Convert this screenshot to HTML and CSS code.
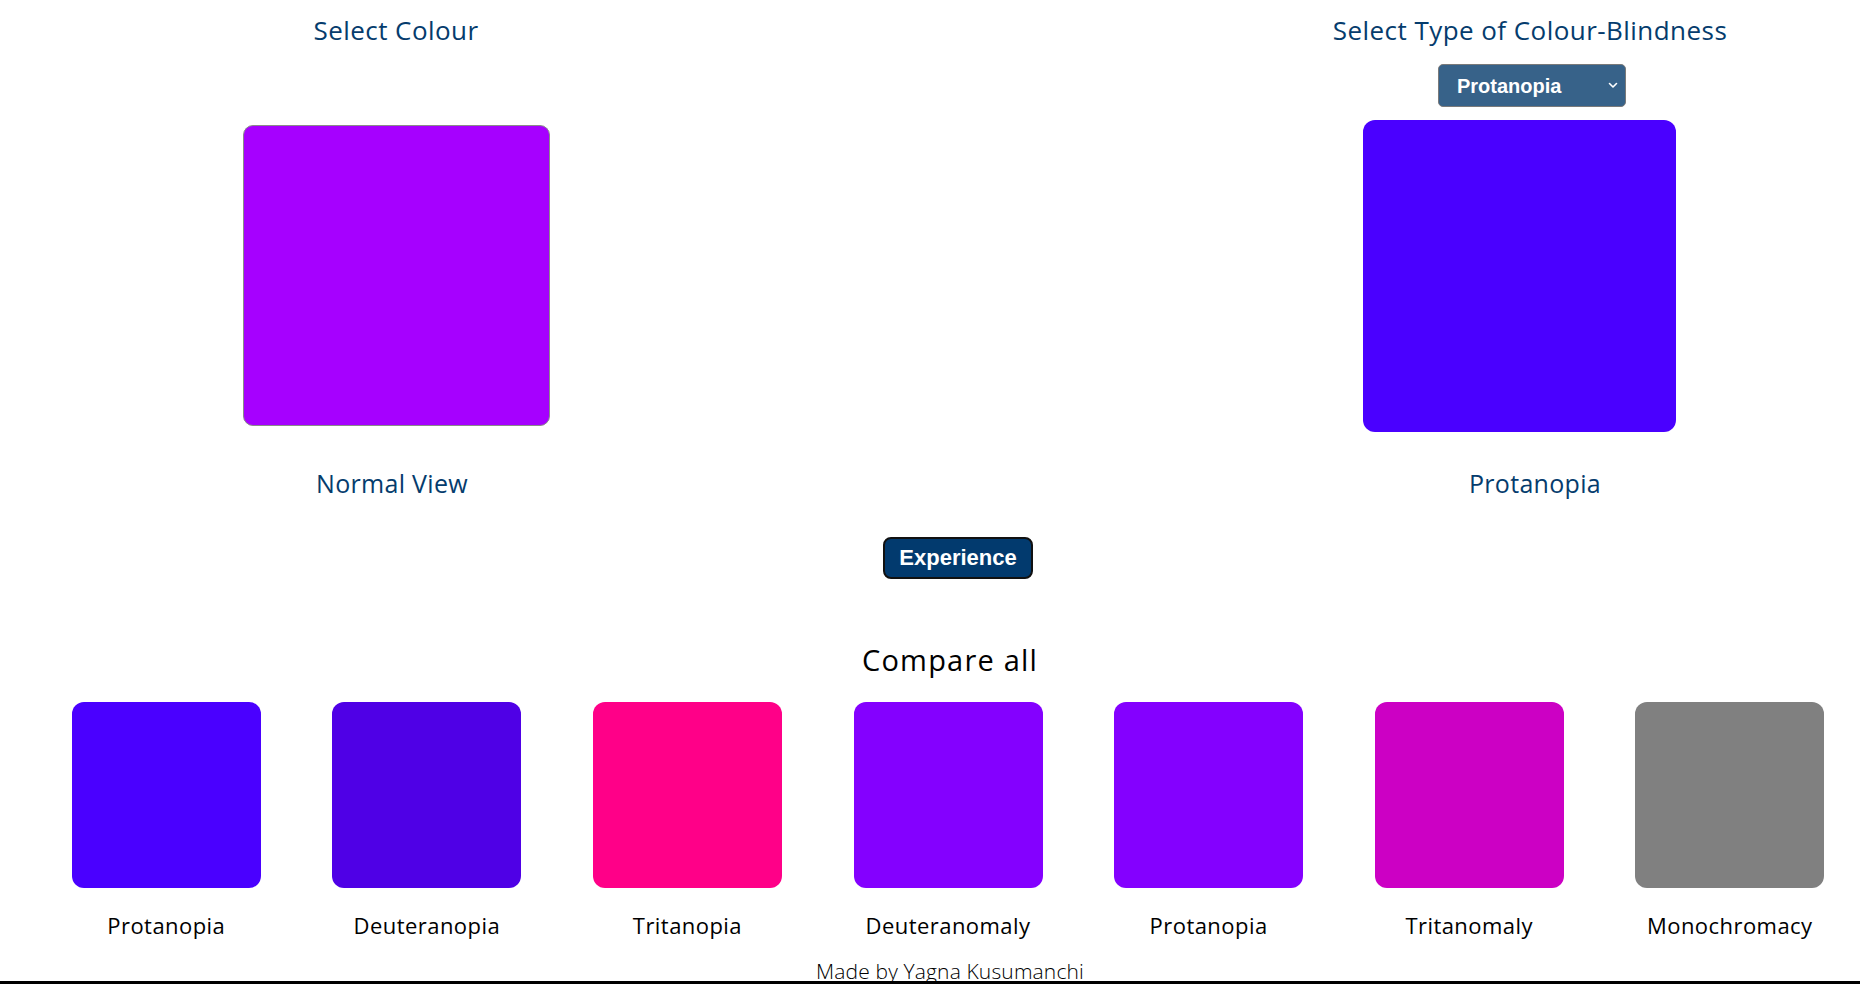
FILE: index.html
```html
<!DOCTYPE html>
<html lang="en">
<head>
<meta charset="utf-8">
<title>Colour Blindness Simulator</title>
<link rel="stylesheet" href="styles.css">
</head>
<body>
<main class="page">
  <section class="top">
    <div class="col col-left">
      <h2 class="heading">Select Colour</h2>
      <div class="swatch swatch-input" style="background:#a600ff"></div>
      <p class="view-label">Normal View</p>
    </div>
    <div class="col col-right">
      <h2 class="heading">Select Type of Colour-Blindness</h2>
      <div class="select-wrap">
        <select class="type-select">
          <option>Protanopia</option>
          <option>Deuteranopia</option>
          <option>Tritanopia</option>
        </select>
        <svg class="chev" width="10" height="7" viewBox="0 0 10 7"><path d="M1.5 1.5 L5 5 L8.5 1.5" fill="none" stroke="#fff" stroke-width="1.6" stroke-linecap="round" stroke-linejoin="round"/></svg>
      </div>
      <div class="swatch swatch-result" style="background:#4a00ff"></div>
      <p class="view-label">Protanopia</p>
    </div>
  </section>

  <div class="btn-row">
    <button class="exp-btn">Experience</button>
  </div>

  <h2 class="compare-title">Compare all</h2>

  <section class="compare">
    <div class="cell"><div class="mini" style="background:#4a00ff"></div><p class="mini-label">Protanopia</p></div>
    <div class="cell"><div class="mini" style="background:#4f00e6"></div><p class="mini-label">Deuteranopia</p></div>
    <div class="cell"><div class="mini" style="background:#ff0088"></div><p class="mini-label">Tritanopia</p></div>
    <div class="cell"><div class="mini" style="background:#8400ff"></div><p class="mini-label">Deuteranomaly</p></div>
    <div class="cell"><div class="mini" style="background:#8400ff"></div><p class="mini-label">Protanopia</p></div>
    <div class="cell"><div class="mini" style="background:#cc00c4"></div><p class="mini-label">Tritanomaly</p></div>
    <div class="cell"><div class="mini" style="background:#808080"></div><p class="mini-label">Monochromacy</p></div>
  </section>

  <footer class="footer">Made by Yagna Kusumanchi</footer>
</main>
</body>
</html>
```

FILE: styles.css
```css
* { box-sizing: border-box; }

html, body {
  margin: 0;
  padding: 0;
  background: #ffffff;
}

body {
  font-family: "Open Sans", "Noto Sans", sans-serif;
  color: #000;
  width: 1860px;
  height: 984px;
  overflow: hidden;
}

.page {
  display: flex;
  flex-direction: column;
  height: 984px;
}

.top {
  display: flex;
  justify-content: space-between;
  padding: 0 80px 0 146px;
}

.col {
  width: 500px;
  display: flex;
  flex-direction: column;
  align-items: center;
}

.heading {
  margin: 14px 0 0;
  font-size: 26px;
  line-height: 32px;
  letter-spacing: 0.45px;
  font-weight: 500;
  color: #053c6d;
}

.swatch {
  border-radius: 11px;
}

.swatch-input {
  width: 307px;
  height: 301px;
  margin-top: 79px;
  border: 1px solid #8a8a8a;
  border-radius: 10px;
}

.select-wrap {
  position: relative;
  margin-top: 18px;
  margin-left: 4px;
}

.type-select {
  appearance: none;
  -webkit-appearance: none;
  width: 188px;
  height: 43px;
  padding: 0 0 0 18px;
  background: #376289;
  color: #fff;
  border: 1px solid #7a7a7a;
  border-radius: 5px;
  font-family: "Liberation Sans", Arial, sans-serif;
  font-weight: bold;
  font-size: 20px;
}

.chev {
  position: absolute;
  right: 8px;
  top: 18px;
  pointer-events: none;
}

.swatch-result {
  width: 313px;
  height: 312px;
  margin-top: 13px;
  margin-left: -22px;
  border-radius: 12px;
}

.view-label {
  margin: 41px 8px 0 0;
  font-size: 25px;
  line-height: 32px;
  letter-spacing: 0.3px;
  font-weight: 500;
  color: #053c6d;
}

.col-right .view-label {
  margin-top: 35px;
  margin-left: 10px;
  margin-right: 0;
}

.btn-row {
  display: flex;
  justify-content: center;
  padding-left: 56px;
  margin-top: 38px;
}

.exp-btn {
  width: 150px;
  height: 42px;
  background: #023a6e;
  color: #fff;
  border: 2px solid #111;
  border-radius: 8px;
  font-family: "Liberation Sans", Arial, sans-serif;
  font-weight: bold;
  font-size: 22px;
  padding: 0;
}

.compare-title {
  margin: 63px 0 0;
  padding-left: 40px;
  text-align: center;
  font-size: 29px;
  line-height: 36px;
  letter-spacing: 1.2px;
  font-weight: 400;
  color: #000;
}

.compare {
  display: flex;
  margin-top: 24px;
  padding-left: 36px;
}

.cell {
  width: 261px;
  display: flex;
  flex-direction: column;
  align-items: center;
}

.mini {
  width: 189px;
  height: 186px;
  border-radius: 12px;
}

.mini-label {
  margin: 22px 0 0;
  font-size: 22px;
  line-height: 30px;
  letter-spacing: 0.45px;
  font-weight: 500;
  color: #000;
}

.footer {
  margin-top: auto;
  padding: 2px 0 0 40px;
  text-align: center;
  font-size: 21px;
  font-weight: 300;
  line-height: 20px;
  letter-spacing: 0.15px;
  border-bottom: 3px solid #000;
}
```
